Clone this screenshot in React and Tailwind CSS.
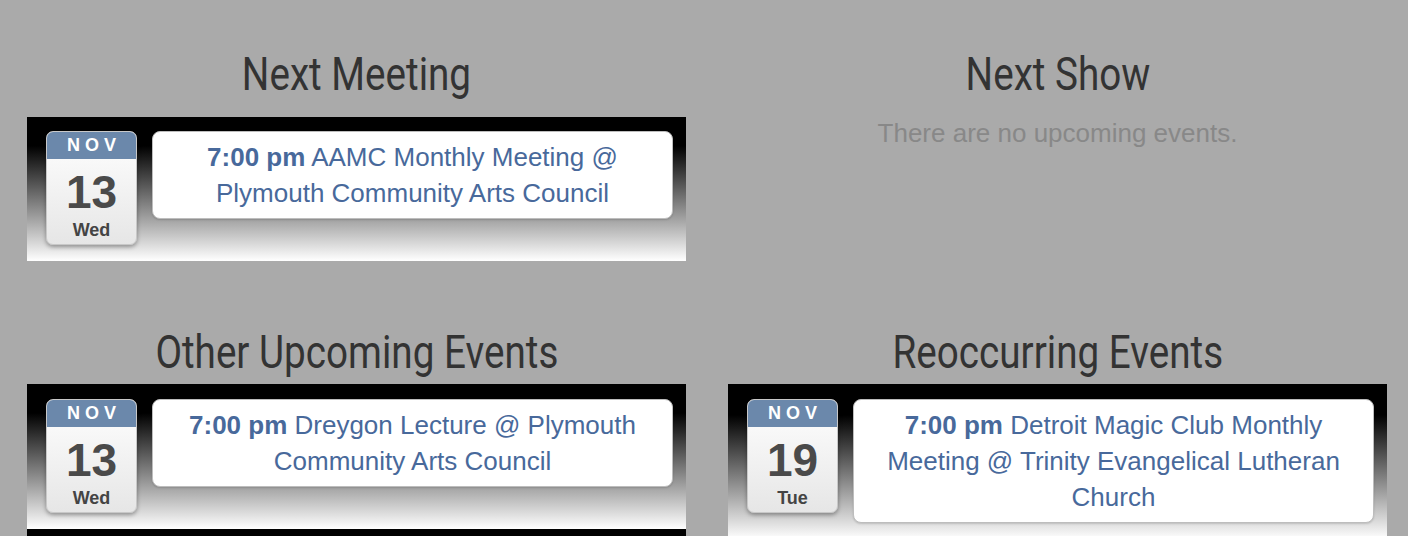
const events = {
  meeting: [
    { mon: "NOV", day: "13", dow: "Wed", time: "7:00 pm", title: "AAMC Monthly Meeting @ Plymouth Community Arts Council" },
  ],
  other: [
    { mon: "NOV", day: "13", dow: "Wed", time: "7:00 pm", title: "Dreygon Lecture @ Plymouth Community Arts Council" },
    { mon: "NOV", day: "20", dow: "Wed", time: "7:00 pm", title: "Magic Jam @ Plymouth Community Arts Council" },
  ],
  recurring: [
    { mon: "NOV", day: "19", dow: "Tue", time: "7:00 pm", title: "Detroit Magic Club Monthly Meeting @ Trinity Evangelical Lutheran Church" },
  ],
};

function Heading({ children, className = "mb-2" }) {
  return (
    <h2 className={"text-center text-[46px] leading-[54px] text-[#333] font-['Roboto',sans-serif] " + className}>
      <span className="inline-block scale-x-[0.84]">{children}</span>
    </h2>
  );
}

function DateBadge({ mon, day, dow }) {
  return (
    <div className="w-[91px] h-[114px] shrink-0 rounded-[7px] border border-[#c8c8c8] bg-gradient-to-b from-white to-[#e6e6e6] shadow-[0_2px_4px_rgba(0,0,0,0.35)] overflow-hidden flex flex-col items-center font-['Liberation_Sans',Arial,sans-serif]">
      <div className="w-full h-[27px] bg-[#6b88ab] text-white text-[18px] font-bold leading-[27px] tracking-[5px] text-center pl-[5px]">
        {mon}
      </div>
      <div className="mt-[10px] text-[46px] leading-[46px] font-bold text-[#4a4a4a]">{day}</div>
      <div className="mt-[6px] text-[18px] leading-[18px] font-bold text-[#444]">{dow}</div>
    </div>
  );
}

function EventItem({ ev, top = "pt-[14px]" }) {
  return (
    <div className={"flex items-start pl-[19px] pr-[13px] pb-[16px] bg-[linear-gradient(to_bottom,#000_20%,#fff_100%)] " + top}>
      <DateBadge mon={ev.mon} day={ev.day} dow={ev.dow} />
      <div className="ml-[15px] flex-1 bg-white border border-[#bdbdbd] rounded-[8px] px-[10px] py-[7px] text-center text-[26px] leading-[36px] text-[#48699b] font-['Liberation_Sans',Arial,sans-serif] shadow-[0_1px_2px_rgba(0,0,0,0.15)]">
        <span className="font-bold">{ev.time}</span> {ev.title}
      </div>
    </div>
  );
}

export default function App() {
  return (
    <div className="h-[536px] overflow-hidden bg-[#aaaaaa] pl-[27px] pt-[47px]">
      <div className="grid grid-cols-[659px_659px] gap-x-[42px] gap-y-[64px]">
        <section>
          <Heading>Next Meeting</Heading>
          <div className="mt-[16px]">
            {events.meeting.map((ev, i) => (
              <EventItem key={i} ev={ev} />
            ))}
          </div>
        </section>

        <section>
          <Heading>Next Show</Heading>
          <p className="mt-[14px] text-center text-[26px] leading-[36px] text-[#888] font-['Liberation_Sans',Arial,sans-serif]">
            There are no upcoming events.
          </p>
        </section>

        <section>
          <Heading className="mb-[5px]">Other Upcoming Events</Heading>
          <div>
            {events.other.map((ev, i) => (
              <EventItem key={i} ev={ev} top="pt-[15px]" />
            ))}
          </div>
        </section>

        <section>
          <Heading className="mb-[5px]">Reoccurring Events</Heading>
          <div>
            {events.recurring.map((ev, i) => (
              <EventItem key={i} ev={ev} top="pt-[15px]" />
            ))}
          </div>
        </section>
      </div>
    </div>
  );
}
